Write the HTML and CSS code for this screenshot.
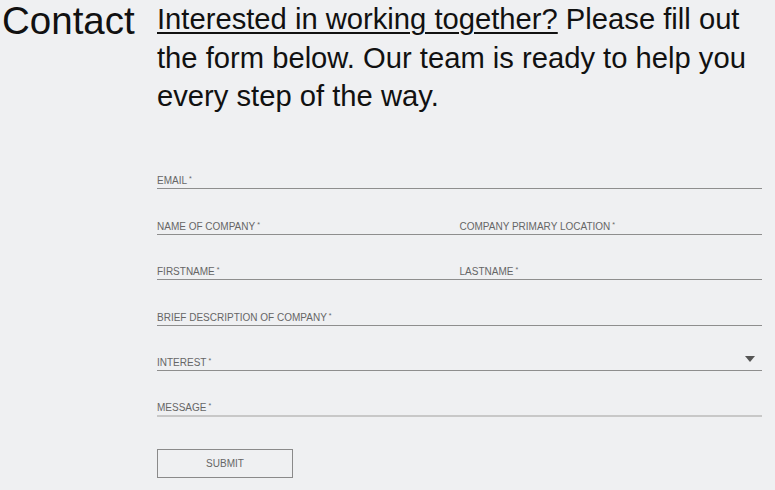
FILE: index.html
```html
<!DOCTYPE html>
<html lang="en">
<head>
<meta charset="utf-8">
<title>Contact</title>
<link rel="stylesheet" href="styles.css">
</head>
<body>
<main class="page">
  <header class="intro">
    <h1 class="title">Contact</h1>
    <p class="lead"><a class="lead-link" href="#">Interested in working together?</a> Please fill out the form below. Our team is ready to help you every step of the way.</p>
  </header>
  <form class="form">
    <div class="field field-wide"><span class="label">EMAIL<sup>*</sup></span></div>
    <div class="field"><span class="label">NAME OF COMPANY<sup>*</sup></span></div>
    <div class="field"><span class="label">COMPANY PRIMARY LOCATION<sup>*</sup></span></div>
    <div class="field"><span class="label">FIRSTNAME<sup>*</sup></span></div>
    <div class="field"><span class="label">LASTNAME<sup>*</sup></span></div>
    <div class="field field-wide"><span class="label">BRIEF DESCRIPTION OF COMPANY<sup>*</sup></span></div>
    <div class="field field-wide field-select"><span class="label">INTEREST<sup>*</sup></span><span class="caret"></span></div>
    <div class="field field-wide field-message"><span class="label">MESSAGE<sup>*</sup></span></div>
    <div class="actions field-wide"><button type="button" class="submit">SUBMIT</button></div>
  </form>
</main>
</body>
</html>
```

FILE: styles.css
```css
html, body {
  margin: 0;
  padding: 0;
  background: #eff0f2;
}
body {
  font-family: "Liberation Sans", Arial, sans-serif;
  color: #111;
}
.page {
  width: 775px;
  height: 490px;
  overflow: hidden;
}
.intro {
  display: flex;
  align-items: flex-start;
}
.title {
  margin: 0;
  padding: 0 0 0 2px;
  width: 157px;
  flex: none;
  box-sizing: border-box;
  font-size: 38.5px;
  font-weight: 400;
  line-height: 42px;
  white-space: nowrap;
}
.lead {
  margin: 0;
  width: 605px;
  font-size: 29.2px;
  line-height: 38.5px;
  letter-spacing: 0;
}
.lead-link {
  color: inherit;
  text-decoration: underline;
  text-decoration-thickness: 2px;
  text-underline-offset: 3px;
}
.form {
  margin: 28px 0 0 157px;
  width: 605px;
  display: grid;
  grid-template-columns: 1fr 1fr;
}
.field {
  height: 45.6px;
  box-sizing: border-box;
  display: flex;
  align-items: flex-end;
  justify-content: space-between;
  border-bottom: 1px solid #8e8e8e;
}
.field-wide {
  grid-column: 1 / -1;
}
.label {
  font-size: 10px;
  line-height: 12px;
  padding-bottom: 1px;
  color: #666;
}
.label sup {
  font-size: 7px;
  line-height: 0;
  vertical-align: 3px;
  margin-left: 2px;
}
.caret {
  width: 0;
  height: 0;
  border-left: 5px solid transparent;
  border-right: 5px solid transparent;
  border-top: 6px solid #555;
  margin: 0 7px 8px 0;
}
.field-message {
  border-bottom: 2px solid #c8c8c8;
}
.actions {
  padding-top: 32px;
}
.submit {
  width: 136px;
  height: 29px;
  background: transparent;
  border: 1px solid #8a8a8a;
  font-family: "Liberation Sans", Arial, sans-serif;
  font-size: 10px;
  color: #666;
  padding: 0;
}
```
